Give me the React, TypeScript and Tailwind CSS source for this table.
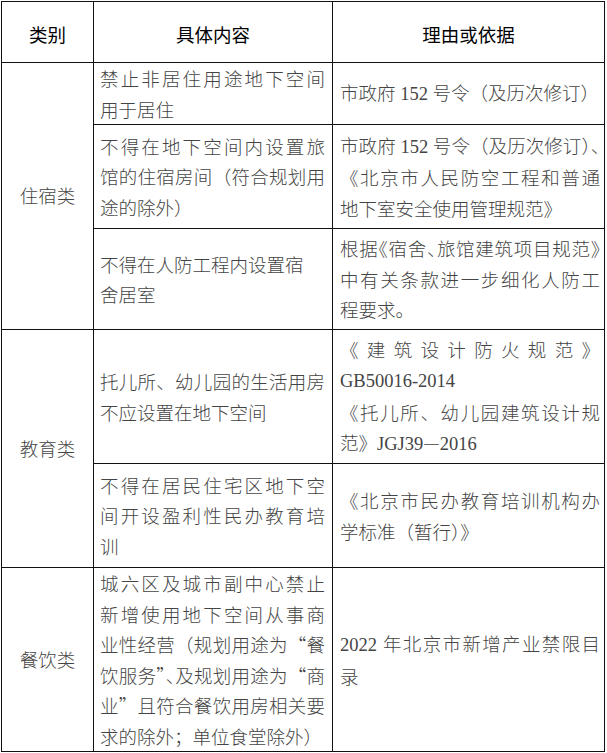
import type { ReactNode } from 'react';

type Line = { t: ReactNode; j?: boolean };

const L = (t: ReactNode, j = false): Line => ({ t, j });

// latin runs are set in a Times-like face
const en = (s: string) => <span className="font-['Liberation_Serif']">{s}</span>;
// half-width punctuation (Word squeezes these)
const h = (s: string) => <span className="[font-feature-settings:'halt']">{s}</span>;

function Lines({ lines }: { lines: Line[] }) {
  return (
    <div className="w-full">
      {lines.map((l, i) => (
        <div
          key={i}
          className={
            l.j
              ? 'text-justify leading-[30.5px] [text-align-last:justify]'
              : 'whitespace-nowrap text-left leading-[30.5px]'
          }
        >
          {l.t}
        </div>
      ))}
    </div>
  );
}

function Head({ children }: { children: ReactNode }) {
  return (
    <div className="flex items-center justify-center bg-white pt-[6px] text-[18.5px] font-normal text-black">
      {children}
    </div>
  );
}

function Cat({ children, span }: { children: ReactNode; span: string }) {
  return (
    <div className={`flex items-center justify-center bg-white ${span}`}>
      <span>{children}</span>
    </div>
  );
}

function Mid({ lines }: { lines: Line[] }) {
  return (
    <div className="flex items-center bg-white pl-[6px] pr-[7px]">
      <Lines lines={lines} />
    </div>
  );
}

function Why({ lines }: { lines: Line[] }) {
  return (
    <div className="flex items-center bg-white pl-[7px] pr-[4px]">
      <Lines lines={lines} />
    </div>
  );
}

export default function App() {
  return (
    <div className="min-h-screen bg-white font-['Noto_Sans_CJK_SC',sans-serif] text-[18.5px] font-light text-[#444]">
      <div className="ml-px mt-px grid w-max grid-cols-[91px_238px_271px] grid-rows-[60px_61px_103px_100px_133px_103px_183px] gap-px bg-[#111] p-px">
        <Head>类别</Head>
        <Head>具体内容</Head>
        <Head>理由或依据</Head>

        <Cat span="row-span-3">住宿类</Cat>
        <Mid lines={[L('禁止非居住用途地下空间', true), L('用于居住')]} />
        <Why lines={[L(<>市政府{en(' 152 ')}号令（及历次修订）</>)]} />

        <Mid
          lines={[
            L('不得在地下空间内设置旅', true),
            L('馆的住宿房间（符合规划用', true),
            L('途的除外）'),
          ]}
        />
        <Why
          lines={[
            L(<>市政府{en(' 152 ')}号令（及历次修订{h('）、')}</>, true),
            L('《北京市人民防空工程和普通', true),
            L('地下室安全使用管理规范》'),
          ]}
        />

        <Mid lines={[L('不得在人防工程内设置宿'), L('舍居室')]} />
        <Why
          lines={[
            L(<>根据{h('《')}宿舍{h('、')}旅馆建筑项目规范{h('》')}</>, true),
            L('中有关条款进一步细化人防工', true),
            L('程要求。'),
          ]}
        />

        <Cat span="row-span-2">教育类</Cat>
        <Mid lines={[L('托儿所、幼儿园的生活用房', true), L('不应设置在地下空间')]} />
        <Why
          lines={[
            L('《建筑设计防火规范》', true),
            L(en('GB50016-2014')),
            L('《托儿所、幼儿园建筑设计规', true),
            L(<>范》{en('JGJ39')}—{en('2016')}</>),
          ]}
        />

        <Mid
          lines={[
            L('不得在居民住宅区地下空', true),
            L('间开设盈利性民办教育培', true),
            L('训'),
          ]}
        />
        <Why lines={[L('《北京市民办教育培训机构办', true), L('学标准（暂行）》')]} />

        <Cat span="">餐饮类</Cat>
        <Mid
          lines={[
            L('城六区及城市副中心禁止', true),
            L('新增使用地下空间从事商', true),
            L('业性经营（规划用途为“餐', true),
            L(<>饮服务{h('”、')}及规划用途为“商</>, true),
            L('业”且符合餐饮用房相关要', true),
            L('求的除外；单位食堂除外）'),
          ]}
        />
        <Why lines={[L(<>{en('2022 ')}年北京市新增产业禁限目</>, true), L('录')]} />
      </div>
    </div>
  );
}
